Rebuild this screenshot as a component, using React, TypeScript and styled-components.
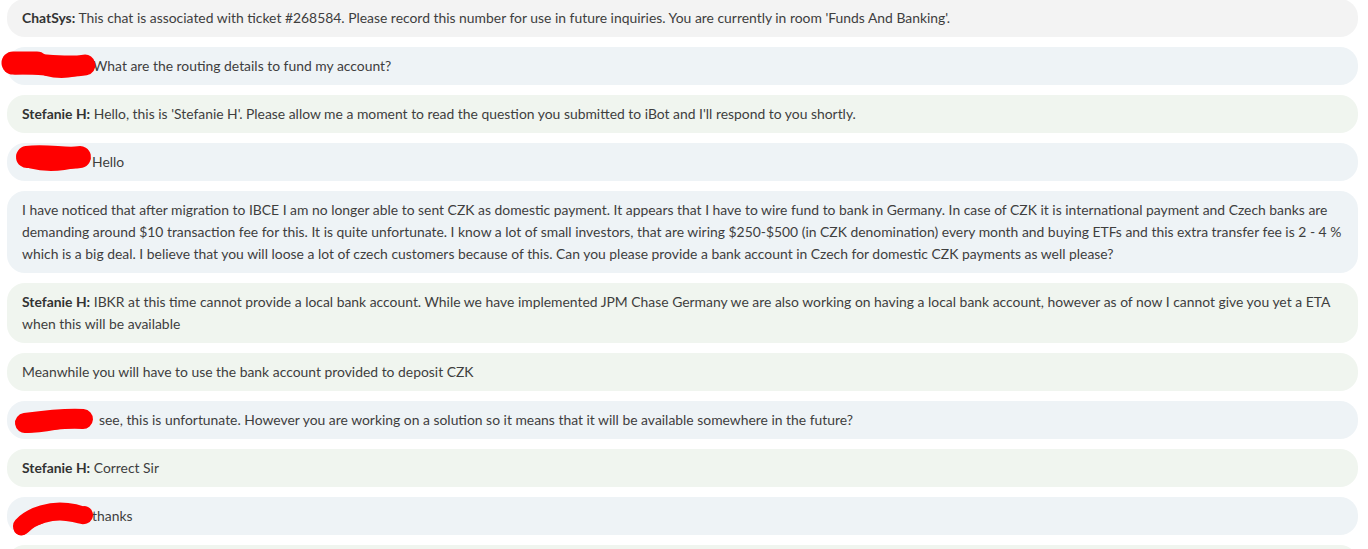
import React from 'react'
import styled, { createGlobalStyle } from 'styled-components'

const GlobalStyle = createGlobalStyle`
  html, body {
    margin: 0;
    padding: 0;
    background: #ffffff;
    overflow: hidden;
  }
  body {
    font-family: Lato, 'Liberation Sans', Arial, sans-serif;
  }
`

type Kind = 'system' | 'client' | 'agent'

const bubbleColors: Record<Kind, string> = {
  system: '#f3f3f3',
  client: '#eef3f6',
  agent: '#f0f5ef',
}

const ChatLog = styled.div`
  display: flex;
  flex-direction: column;
  gap: 10px;
  margin-top: -1px;
  padding: 0 10px 0 7px;
`

const Bubble = styled.div<{ $kind: Kind }>`
  position: relative;
  min-height: 22px;
  padding: 8px 15px;
  border-radius: 18px;
  background: ${(p) => bubbleColors[p.$kind]};
  font-size: 13.9px;
  line-height: 22px;
  color: #3e3e3e;
`

const Line = styled.span`
  display: block;
  white-space: nowrap;
`

const Sender = styled.b`
  font-weight: 700;
  color: #333333;
`

const NameSpace = styled.span<{ $w: number }>`
  display: inline-block;
  width: ${(p) => p.$w}px;
`

const Redaction = styled.svg`
  position: absolute;
  left: 0;
  top: 0;
  overflow: visible;
  pointer-events: none;
`

// freehand red marker strokes over the client's name: [path, width]
const scribbles: Record<string, [string, number][]> = {
  a: [
    ['M8 17 C 30 15, 55 22, 78 18', 21],
    ['M6 16 L 30 16', 23],
    ['M40 21 C 55 25, 65 22, 74 20', 16],
  ],
  b: [
    ['M20 14 C 40 11, 60 17, 73 14', 22],
    ['M24 18 C 40 22, 58 20, 70 17', 15],
  ],
  c: [
    ['M18 22 C 40 19, 60 17, 76 18', 20],
    ['M20 25 C 35 25, 50 21, 60 20', 14],
  ],
  d: [
    ['M15 29 C 25 18, 45 13, 60 15 S 74 19, 77 18', 18],
    ['M14 31 C 18 26, 24 22, 32 20', 15],
  ],
}

function Scribble({ id }: { id: string }) {
  return (
    <Redaction width="100" height="40">
      {scribbles[id].map(([d, w], i) => (
        <path
          key={i}
          d={d}
          fill="none"
          stroke="#ff0000"
          strokeWidth={w}
          strokeLinecap="round"
          strokeLinejoin="round"
        />
      ))}
    </Redaction>
  )
}

export default function App() {
  return (
    <>
      <GlobalStyle />
      <ChatLog>
        <Bubble $kind="system">
          <Sender>ChatSys:</Sender> This chat is associated with ticket #268584. Please record this
          number for use in future inquiries. You are currently in room 'Funds And Banking'.
        </Bubble>
        <Bubble $kind="client">
          <NameSpace $w={71} />
          What are the routing details to fund my account?
          <Scribble id="a" />
        </Bubble>
        <Bubble $kind="agent">
          <Sender>Stefanie H:</Sender> Hello, this is 'Stefanie H'. Please allow me a moment to read
          the question you submitted to iBot and I'll respond to you shortly.
        </Bubble>
        <Bubble $kind="client">
          <NameSpace $w={70} />
          Hello
          <Scribble id="b" />
        </Bubble>
        <Bubble $kind="client">
          <Line>
            I have noticed that after migration to IBCE I am no longer able to sent CZK as domestic
            payment. It appears that I have to wire fund to bank in Germany. In case of CZK it is
            international payment and Czech banks are
          </Line>
          <Line>
            demanding around $10 transaction fee for this. It is quite unfortunate. I know a lot of
            small investors, that are wiring $250-$500 (in CZK denomination) every month and buying
            ETFs and this extra transfer fee is 2 - 4 %
          </Line>
          <Line>
            which is a big deal. I believe that you will loose a lot of czech customers because of
            this. Can you please provide a bank account in Czech for domestic CZK payments as well
            please?
          </Line>
        </Bubble>
        <Bubble $kind="agent">
          <Line>
            <Sender>Stefanie H:</Sender> IBKR at this time cannot provide a local bank account.
            While we have implemented JPM Chase Germany we are also working on having a local bank
            account, however as of now I cannot give you yet a ETA
          </Line>
          <Line>when this will be available</Line>
        </Bubble>
        <Bubble $kind="agent">Meanwhile you will have to use the bank account provided to deposit CZK</Bubble>
        <Bubble $kind="client">
          <NameSpace $w={77} />
          see, this is unfortunate. However you are working on a solution so it means that it will
          be available somewhere in the future?
          <Scribble id="c" />
        </Bubble>
        <Bubble $kind="agent">
          <Sender>Stefanie H:</Sender> Correct Sir
        </Bubble>
        <Bubble $kind="client">
          <NameSpace $w={70} />
          thanks
          <Scribble id="d" />
        </Bubble>
        <Bubble $kind="agent" />
      </ChatLog>
    </>
  )
}
